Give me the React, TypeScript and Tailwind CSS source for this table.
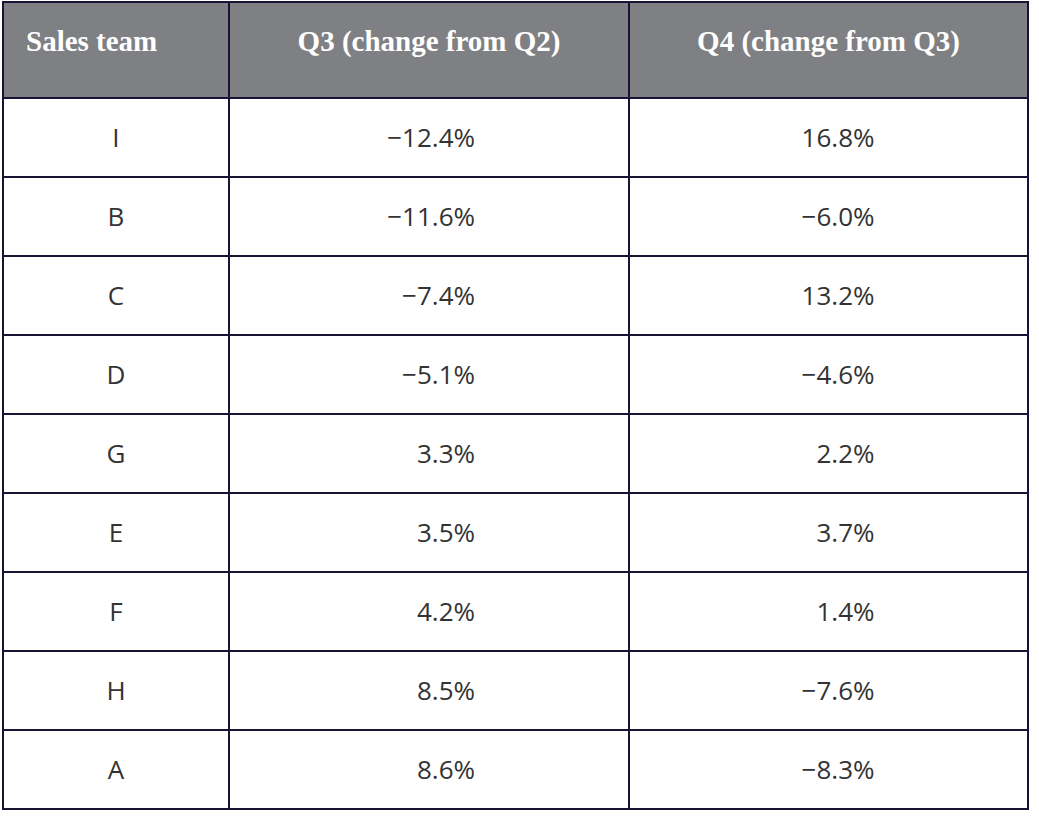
import React from "react";

const rows = [
  { team: "I", q3: "−12.4%", q4: "16.8%" },
  { team: "B", q3: "−11.6%", q4: "−6.0%" },
  { team: "C", q3: "−7.4%", q4: "13.2%" },
  { team: "D", q3: "−5.1%", q4: "−4.6%" },
  { team: "G", q3: "3.3%", q4: "2.2%" },
  { team: "E", q3: "3.5%", q4: "3.7%" },
  { team: "F", q3: "4.2%", q4: "1.4%" },
  { team: "H", q3: "8.5%", q4: "−7.6%" },
  { team: "A", q3: "8.6%", q4: "−8.3%" },
];

const headCell =
  "h-[96px] border-r-2 border-b-2 border-[#1a1335] bg-[#7f8083] text-white font-bold text-[29px] leading-[35px] pt-[21px]";
const bodyCell =
  "h-[79px] border-r-2 border-b-2 border-[#1a1335] flex items-center justify-center text-[#333333] text-[26px]";

const App = () => {
  return (
    <div className="min-h-screen bg-white pt-px pl-[2px]">
      <div
        className="grid grid-cols-[226px_400px_399px] w-[1027px] border-l-2 border-t-2 border-[#1a1335]"
        style={{ fontFamily: '"Open Sans", "Noto Sans", sans-serif' }}
      >
        <div className={`${headCell} pl-[22px]`} style={{ fontFamily: '"Liberation Serif", serif' }}>
          Sales team
        </div>
        <div className={`${headCell} text-center`} style={{ fontFamily: '"Liberation Serif", serif' }}>
          Q3 (change from Q2)
        </div>
        <div className={`${headCell} text-center`} style={{ fontFamily: '"Liberation Serif", serif' }}>
          Q4 (change from Q3)
        </div>

        {rows.map((row) => (
          <React.Fragment key={row.team}>
            <div className={bodyCell}>{row.team}</div>
            <div className={bodyCell}>
              <span className="inline-block w-[92px] text-right">{row.q3}</span>
            </div>
            <div className={bodyCell}>
              <span className="inline-block w-[92px] text-right">{row.q4}</span>
            </div>
          </React.Fragment>
        ))}
      </div>
    </div>
  );
};

export default App;
